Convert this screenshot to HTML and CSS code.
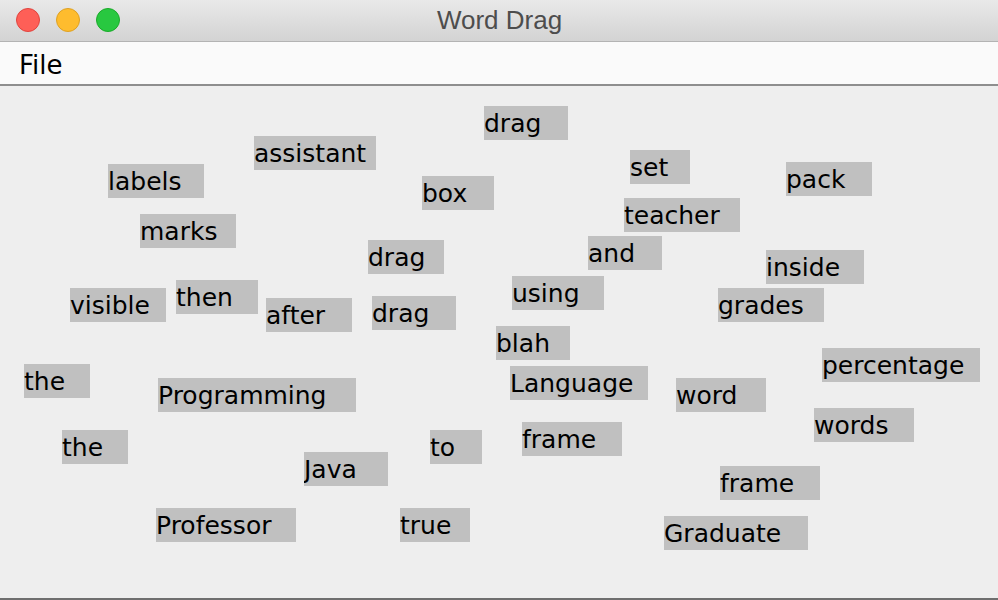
FILE: index.html
```html
<!DOCTYPE html>
<html lang="en">
<head>
<meta charset="utf-8">
<title>Word Drag</title>
<link rel="stylesheet" href="styles.css">
</head>
<body>
<div class="window">
  <header class="titlebar">
    <div class="lights">
      <span class="light red"></span>
      <span class="light yellow"></span>
      <span class="light green"></span>
    </div>
    <div class="title">Word Drag</div>
  </header>
  <nav class="menubar">
    <span class="menu">File</span>
  </nav>
  <main class="canvas">
    <span class="word" style="--x:484px;--y:20px;--w:84px">drag</span>
    <span class="word" style="--x:254px;--y:50px;--w:122px">assistant</span>
    <span class="word" style="--x:630px;--y:64px;--w:60px">set</span>
    <span class="word" style="--x:786px;--y:76px;--w:86px">pack</span>
    <span class="word" style="--x:108px;--y:78px;--w:96px">labels</span>
    <span class="word" style="--x:422px;--y:90px;--w:72px">box</span>
    <span class="word" style="--x:624px;--y:112px;--w:116px">teacher</span>
    <span class="word" style="--x:140px;--y:128px;--w:96px">marks</span>
    <span class="word" style="--x:588px;--y:150px;--w:74px">and</span>
    <span class="word" style="--x:368px;--y:154px;--w:76px">drag</span>
    <span class="word" style="--x:766px;--y:164px;--w:98px">inside</span>
    <span class="word" style="--x:512px;--y:190px;--w:92px">using</span>
    <span class="word" style="--x:176px;--y:194px;--w:82px">then</span>
    <span class="word" style="--x:70px;--y:202px;--w:96px">visible</span>
    <span class="word" style="--x:718px;--y:202px;--w:106px">grades</span>
    <span class="word" style="--x:372px;--y:210px;--w:84px">drag</span>
    <span class="word" style="--x:266px;--y:212px;--w:86px">after</span>
    <span class="word" style="--x:496px;--y:240px;--w:74px">blah</span>
    <span class="word" style="--x:822px;--y:262px;--w:158px">percentage</span>
    <span class="word" style="--x:24px;--y:278px;--w:66px">the</span>
    <span class="word" style="--x:510px;--y:280px;--w:138px">Language</span>
    <span class="word" style="--x:158px;--y:292px;--w:198px">Programming</span>
    <span class="word" style="--x:676px;--y:292px;--w:90px">word</span>
    <span class="word" style="--x:814px;--y:322px;--w:100px">words</span>
    <span class="word" style="--x:522px;--y:336px;--w:100px">frame</span>
    <span class="word" style="--x:62px;--y:344px;--w:66px">the</span>
    <span class="word" style="--x:430px;--y:344px;--w:52px">to</span>
    <span class="word" style="--x:304px;--y:366px;--w:84px">Java</span>
    <span class="word" style="--x:720px;--y:380px;--w:100px">frame</span>
    <span class="word" style="--x:156px;--y:422px;--w:140px">Professor</span>
    <span class="word" style="--x:400px;--y:422px;--w:70px">true</span>
    <span class="word" style="--x:664px;--y:430px;--w:144px">Graduate</span>
  </main>
</div>
</body>
</html>
```

FILE: styles.css
```css
html, body {
  margin: 0;
  padding: 0;
  background: #eeeeee;
}

.window {
  width: 998px;
  height: 600px;
  display: flex;
  flex-direction: column;
  overflow: hidden;
}

.titlebar {
  position: relative;
  height: 41px;
  flex: 0 0 41px;
  background: linear-gradient(to bottom, #e9e9e9 0%, #d3d3d3 100%);
  border-bottom: 1px solid #b3b3b3;
  display: flex;
  align-items: center;
  justify-content: center;
}

.lights {
  position: absolute;
  left: 16px;
  top: 8px;
  display: flex;
  gap: 16px;
}

.light {
  width: 22px;
  height: 22px;
  border-radius: 50%;
  border: 1px solid transparent;
}

.red { background: #fe5f57; border-color: #e0443e; }
.yellow { background: #febc2e; border-color: #dea123; }
.green { background: #28c840; border-color: #1aab29; }

.title {
  font-family: "Liberation Sans", Arial, sans-serif;
  font-size: 26px;
  line-height: 41px;
  color: #4d4d4d;
  padding-left: 1px;
}

.menubar {
  height: 42px;
  flex: 0 0 42px;
  background: #fafafa;
  border-bottom: 2px solid #8e8e8e;
  display: flex;
  align-items: flex-start;
  padding-left: 19px;
}

.menu {
  font-family: "DejaVu Sans", sans-serif;
  font-size: 26px;
  line-height: 42px;
  padding-top: 2px;
  color: #000;
}

.canvas {
  position: relative;
  flex: 1 1 auto;
  background: #eeeeee;
  border-bottom: 2px solid #6e6e6e;
}

.word {
  position: absolute;
  left: var(--x);
  top: var(--y);
  width: var(--w);
  height: 33px;
  padding-top: 1px;
  background: #c0c0c0;
  font-family: "DejaVu Sans", sans-serif;
  font-size: 25px;
  line-height: 34px;
  color: #000;
  white-space: nowrap;
  overflow: hidden;
}
```
